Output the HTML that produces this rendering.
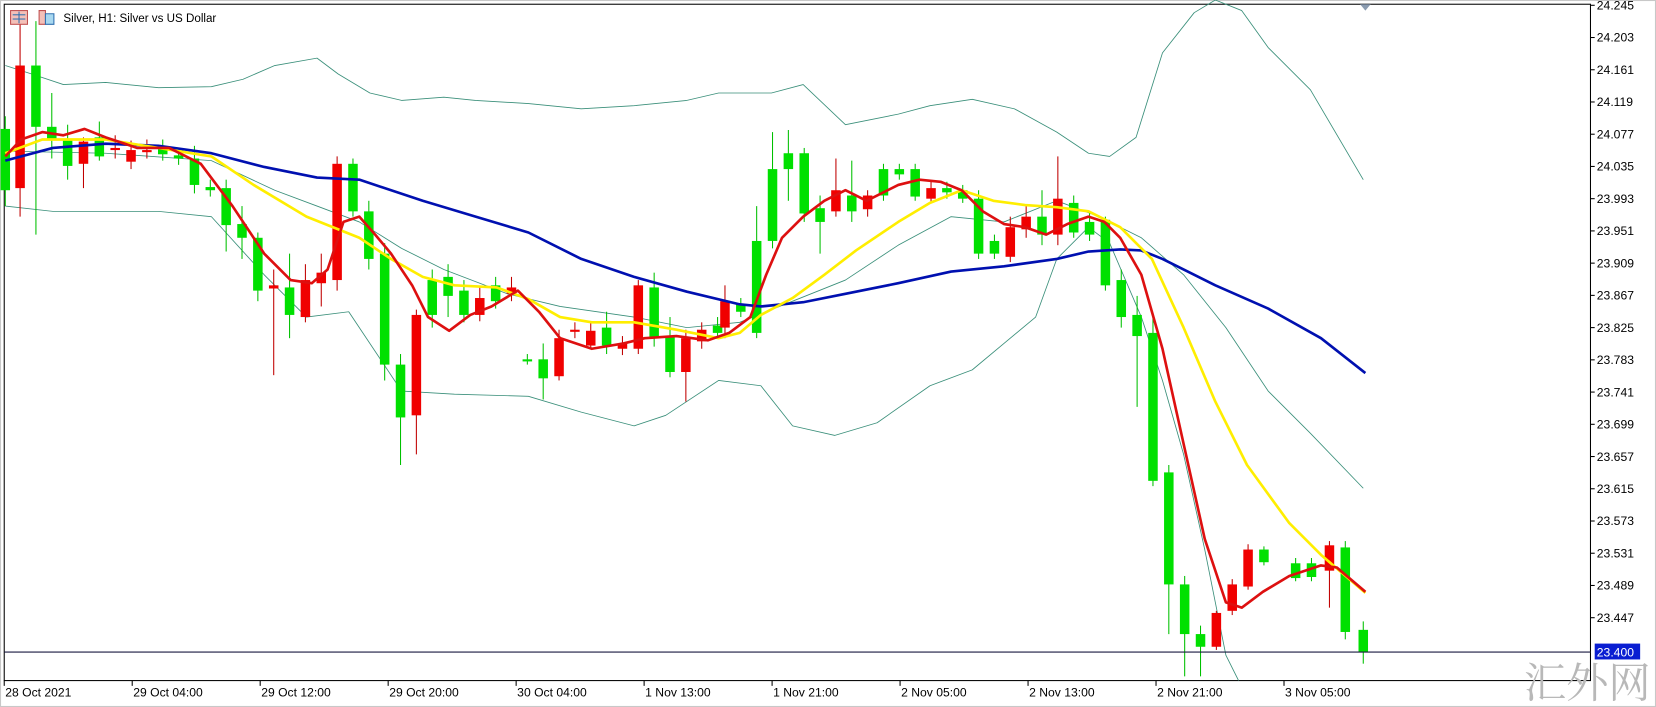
<!DOCTYPE html>
<html><head><meta charset="utf-8"><style>
html,body{margin:0;padding:0;background:#fff;overflow:hidden}
svg{display:block}
text{font-family:"Liberation Sans",sans-serif;font-size:11.5px;fill:#000}
</style></head><body>
<svg id="c" width="1656" height="707" viewBox="0 0 1567 669" preserveAspectRatio="none" xmlns="http://www.w3.org/2000/svg">
<rect x="0" y="0" width="1567" height="669" fill="#fff"/>
<rect x="0.5" y="0.5" width="1566" height="668" fill="none" stroke="#c8c8c8"/>
<rect x="4" y="4" width="1501" height="640" fill="#fff" stroke="#000" stroke-width="1"/>
<g id="bands"></g>
<g id="cand"></g>
<g id="ma"></g>
<line x1="4" y1="617" x2="1505" y2="617" stroke="#1a1a40" stroke-width="1"/>
<polygon points="1287,4 1297,4 1292,10" fill="#8a9bb0"/>
<g id="axis"></g>
<rect x="1509" y="609" width="43" height="15" fill="#0a1ed2"/>
<text x="1511" y="621" style="fill:#fff">23.400</text>
<g>
<rect x="10" y="10" width="16" height="13" fill="#f3c0b8" stroke="#c05050" stroke-width="1"/>
<line x1="12" y1="14" x2="24" y2="14" stroke="#3070b0"/><line x1="12" y1="18" x2="24" y2="18" stroke="#3070b0"/><line x1="18" y1="11" x2="18" y2="22" stroke="#3070b0"/>
<path d="M37 10 v13 h6 v-13 z" fill="#f3c0b8" stroke="#c05050"/>
<path d="M43 13 h8 v10 h-8 z" fill="#a8d8f0" stroke="#3070b0"/>
<text x="60" y="21" style="font-size:11px">Silver, H1:  Silver vs US Dollar</text>
</g>
<text x="1442" y="660" style="font-family:'Noto Serif CJK SC',serif;font-size:40px;fill:#b8b8b8">汇外网</text>
</svg>
<script>
var NS="http://www.w3.org/2000/svg";
function el(p,t,a){var e=document.createElementNS(NS,t);for(var k in a)e.setAttribute(k,a[k]);p.appendChild(e);return e;}
var C=[
[5,180,122,110,195],[19,62,178,20,205],[34,120,62,20,222],[49,132,120,88,150],[64,157,132,118,170],[79,134,155,130,178],[94,148,130,115,152],[109,140,142,128,150],[124,142,153,133,160],[139,142,144,132,150],[154,146,140,132,152],[169,150,147,140,156],[184,175,150,138,183],[199,180,177,170,186],[214,213,178,170,238],[229,225,212,195,245],[244,275,225,220,285],[259,270,273,255,355],[274,298,272,240,320],[289,265,300,250,305],[304,258,268,240,290],[319,155,265,148,275],[334,200,155,150,205],[349,245,200,190,255],[364,345,240,230,360],[379,395,345,335,440],[394,298,393,293,430],[409,298,265,255,310],[424,280,262,250,300],[439,298,275,265,305],[454,282,298,272,304],[469,285,270,262,292],[484,272,278,262,285],[499,341,340,335,345],[514,358,340,325,378],[529,320,356,312,360],[544,312,313,305,320],[559,313,327,305,330],[574,327,310,295,335],[589,325,330,318,336],[604,270,330,265,335],[619,320,272,258,328],[634,352,318,300,357],[649,320,352,312,380],[664,312,323,305,330],[679,315,308,300,320],[686,285,310,270,320],[701,295,288,282,300],[716,315,228,195,320],[731,228,160,125,235],[746,160,145,123,190],[761,202,145,140,210],[776,210,197,185,240],[791,180,200,150,205],[806,200,185,152,210],[821,185,198,180,205],[836,185,160,155,190],[851,165,160,155,170],[866,186,160,155,190],[881,178,188,172,192],[896,182,178,172,188],[911,188,180,175,192],[926,240,188,180,245],[941,240,228,222,245],[956,215,243,205,248],[971,205,217,195,225],[986,222,205,180,232],[1001,188,222,148,232],[1016,220,192,185,225],[1031,222,210,200,228],[1046,270,208,205,275],[1061,300,265,255,310],[1076,318,298,280,385],[1091,455,315,300,460],[1106,553,447,440,600],[1121,600,553,545,640],[1136,612,600,592,640],[1151,580,612,578,615],[1166,553,578,548,582],[1181,520,555,515,558],[1196,532,520,517,535],[1226,547,533,528,550],[1241,546,533,528,550],[1258,516,540,512,575],[1273,598,518,512,605],[1290,617,596,588,628]];
var g=document.getElementById("cand");
C.forEach(function(c){var x=c[0],o=c[1],cl=c[2],h=c[3],l=c[4];var col=cl<o?"#00e000":(cl>o?"#f00000":"#00e000");
var wc=cl<o?"#00c000":"#c00000";
el(g,"line",{x1:x,y1:h,x2:x,y2:l,stroke:wc,"stroke-width":1});
var t=Math.min(o,cl),b=Math.max(o,cl);if(b-t<2){b=t+2;}
el(g,"rect",{x:x-4.5,y:t,width:9,height:b-t,fill:col});});
function pl(p,pts,col,w){el(p,"polyline",{points:pts.map(function(a){return a.join(",")}).join(" "),fill:"none",stroke:col,"stroke-width":w,"stroke-linejoin":"round"});}
var bd=document.getElementById("bands");
pl(bd,[[5,62],[30,70],[60,80],[100,78],[150,83],[200,82],[230,75],[260,62],[300,55],[320,70],[350,88],[380,95],[420,92],[450,95],[500,98],[550,103],[600,100],[650,95],[680,88],[730,88],[760,80],[800,118],[850,108],[880,100],[920,94],[960,103],[1000,125],[1030,145],[1050,148],[1075,130],[1100,50],[1130,12],[1150,0],[1175,10],[1200,45],[1240,85],[1290,170]],"#3a8f7a",0.8);
pl(bd,[[5,143],[100,145],[200,152],[260,180],[300,195],[340,210],[380,235],[420,255],[480,278],[530,290],[600,300],[650,310],[700,305],[750,285],[800,265],[850,232],[900,205],[950,210],[1000,190],[1040,205],[1080,225],[1120,260],[1160,310],[1200,370],[1240,410],[1290,462]],"#3a8f7a",0.8);
pl(bd,[[5,195],[50,200],[100,200],[150,200],[200,205],[250,260],[290,300],[330,295],[380,370],[430,373],[500,375],[550,390],[600,403],[630,393],[680,360],[720,365],[750,403],[790,412],[830,400],[880,365],[920,350],[950,325],[980,300],[1000,245],[1030,215],[1050,230],[1080,300],[1100,360],[1120,430],[1140,520],[1160,620],[1172,644]],"#3a8f7a",0.8);
var m=document.getElementById("ma");
pl(m,[[5,152],[50,140],[100,136],[150,138],[200,145],[250,158],[300,168],[340,170],[400,190],[450,205],[500,220],[550,245],[600,262],[650,276],[700,288],[720,290],[760,286],[800,278],[850,268],[900,257],[950,252],[1000,245],[1030,238],[1060,236],[1080,237],[1100,245],[1150,270],[1200,292],[1250,320],[1292,353]],"#0010b0",2.5);
pl(m,[[5,145],[40,132],[100,132],[150,140],[200,148],[240,175],[290,205],[340,225],[370,245],[400,262],[430,270],[470,272],[500,283],[530,300],[560,305],[600,305],[640,312],[680,320],[700,315],[720,298],[750,282],[780,260],[810,237],[850,210],[880,192],[910,180],[940,190],[970,194],[1000,196],[1030,200],[1060,215],[1090,245],[1120,310],[1150,380],[1180,440],[1220,495],[1250,525],[1292,561]],"#ffee00",2.5);
pl(m,[[5,148],[20,132],[40,125],[60,128],[80,122],[100,130],[130,140],[160,140],[190,155],[220,195],[250,240],[275,265],[295,268],[310,255],[325,210],[340,205],[355,222],[370,240],[390,270],[405,300],[425,313],[445,298],[465,290],[490,275],[510,295],[530,320],[560,330],[590,325],[610,320],[640,318],[670,322],[690,315],[710,300],[725,260],[740,225],[760,205],[780,190],[800,180],[820,190],[850,175],[870,170],[890,172],[910,180],[930,200],[950,212],[970,215],[990,222],[1010,212],[1030,205],[1045,210],[1060,225],[1080,260],[1100,330],[1120,420],[1140,510],[1160,570],[1175,575],[1195,560],[1220,545],[1250,535],[1265,537],[1292,560]],"#dd1010",2.5);
var ax=document.getElementById("axis");
var P=["24.245","24.203","24.161","24.119","24.077","24.035","23.993","23.951","23.909","23.867","23.825","23.783","23.741","23.699","23.657","23.615","23.573","23.531","23.489","23.447"];
P.forEach(function(p,i){var y=5+i*30.5;el(ax,"line",{x1:1505,y1:y,x2:1509,y2:y,stroke:"#000"});var t=el(ax,"text",{x:1511,y:y+4});t.textContent=p;});
var T=["28 Oct 2021","29 Oct 04:00","29 Oct 12:00","29 Oct 20:00","30 Oct 04:00","1 Nov 13:00","1 Nov 21:00","2 Nov 05:00","2 Nov 13:00","2 Nov 21:00","3 Nov 05:00"];
T.forEach(function(s,i){var x=4+i*121.1;el(ax,"line",{x1:x,y1:644,x2:x,y2:649,stroke:"#000"});var t=el(ax,"text",{x:x+1,y:659});t.textContent=s;});
</script>
</body></html>
